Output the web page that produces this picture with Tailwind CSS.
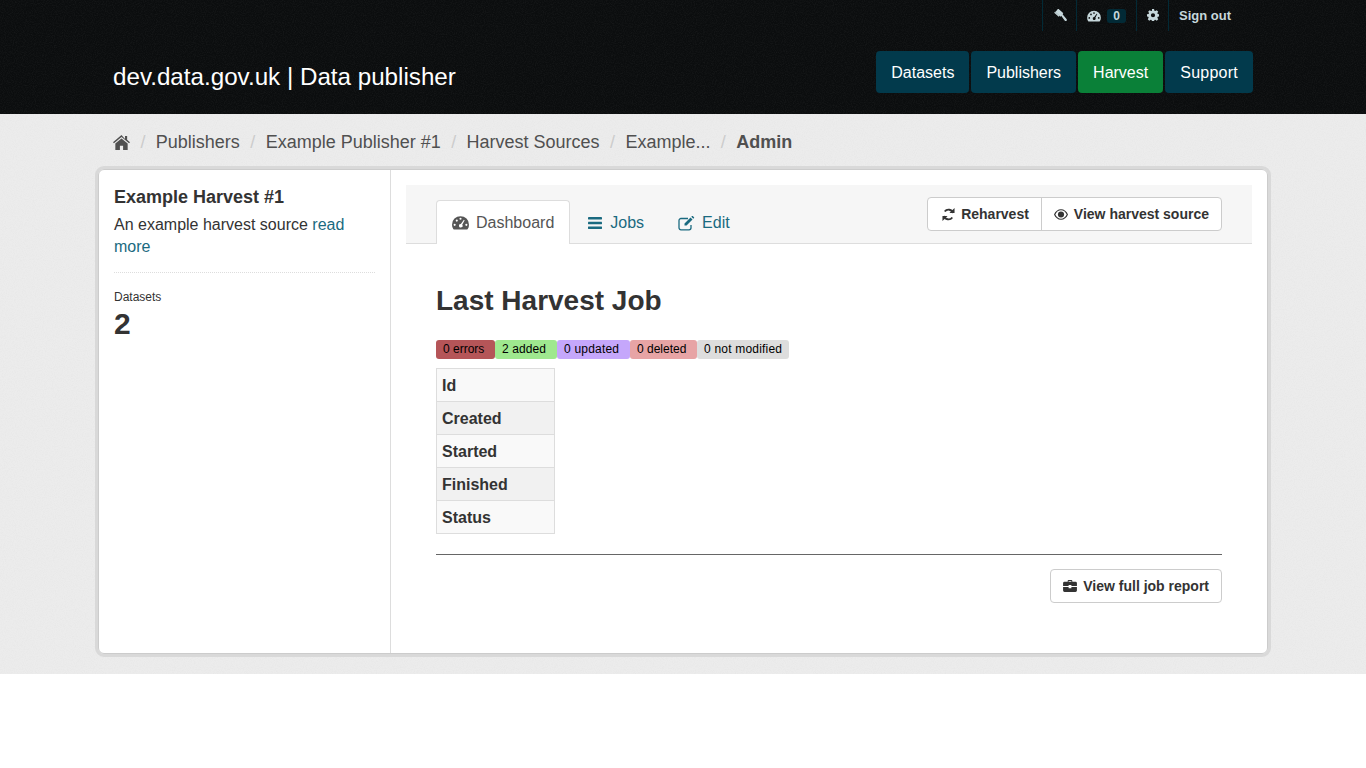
<!DOCTYPE html>
<html lang="en">
<head>
    <meta charset="UTF-8">
    <meta name="viewport" content="width=device-width, initial-scale=1.0">
    <title>Harvest Source Admin</title>
    <script src="https://cdn.jsdelivr.net/npm/@tailwindcss/browser@4"></script>
</head>
<body class="bg-white text-[#333] font-['Liberation_Sans',Arial,sans-serif] text-base">
    <!-- Filter for the speckled background of masthead and main -->
    <svg class="absolute w-0 h-0">
        <filter id="speckle"><feTurbulence type="fractalNoise" baseFrequency="0.9" numOctaves="2"/><feColorMatrix values="0 0 0 0 0.5  0 0 0 0 0.5  0 0 0 0 0.5  1.2 0 0 0 -0.45"/></filter>
    </svg>

    <!-- Masthead -->
    <header class="relative h-[114px] bg-[#0b0d0e]">
        <svg class="absolute inset-0 w-full h-full opacity-10"><rect width="100%" height="100%" filter="url(#speckle)"/></svg>
        <div class="relative w-[1170px] ml-[98px] pl-[15px] pr-[15px]">
            <!-- Account bar -->
            <div class="flex justify-end h-[31px] text-[#c6d7db] text-[13px] font-bold leading-[31px] pr-[22px]">
                <div class="flex h-full border-l border-[#022a36]">
                    <a class="flex items-center justify-center w-[34px] border-r border-[#022a36] pb-[1px]">
                        <svg class="w-[14px] h-[13px]" viewBox="0 0 16 15" fill="currentColor"><path d="M5.800 0l6 5.200-3.300 3.700-6-5.300z"/><path d="M8.700 7l1.500-1.700 5.300 6.300c.6.700.6 1.400 0 1.900-.6.600-1.300.5-1.900 0z"/><path d="M1.300 4.200l1-1.100 5.200 4.600-1 1.100zM5 .8l1-1.100 5.200 4.600-1 1.100z"/></svg>
                    </a>
                    <a class="flex items-center w-[60px] pl-[10px] gap-[6px] border-r border-[#022a36]">
                        <svg class="w-[14px] h-[12px]" viewBox="0 0 16 14" fill="currentColor" fill-rule="evenodd"><path d="M8 1a8 8 0 0 1 8 8c0 1.600-.4 3-1.200 4.200l-.5.3H1.700l-.5-.3A8 8 0 0 1 0 9a8 8 0 0 1 8-8zM2.500 8.200a1 1 0 1 0 0 2 1 1 0 0 0 0-2zM4.500 4.200a1 1 0 1 0 0 2 1 1 0 0 0 0-2zM8 2.500a1 1 0 1 0 0 2 1 1 0 0 0 0-2zM13.500 8.200a1 1 0 1 0 0 2 1 1 0 0 0 0-2zM11.200 4.500L8.300 8.300a1.700 1.700 0 1 0 1.300.7l2.300-4.200z"/></svg>
                        <span class="flex items-center justify-center w-[19px] h-[14px] rounded-[3px] bg-[#022a36] text-[12px] leading-none">0</span>
                    </a>
                    <a class="flex items-center justify-center w-[32px] border-r border-[#022a36] pb-[1px]">
                        <svg class="w-[12px] h-[12px]" viewBox="0 0 16 16" fill="currentColor" fill-rule="evenodd"><path d="M6.600 0h2.800l.4 2.200 1.300.5L13 1.500l2 2-1.200 1.900.5 1.300 2.200.4v2.800l-2.200.4-.5 1.300 1.200 1.900-2 2-1.900-1.200-1.300.5-.4 2.200H6.600l-.4-2.200-1.300-.5L3 15.500l-2-2 1.200-1.900-.5-1.300L0 9.900V7.100l2.200-.4.500-1.300L1.500 3.500l2-2 1.900 1.200 1.300-.5zM8 5.500a2.800 2.800 0 1 0 0 5.600 2.800 2.800 0 0 0 0-5.600z"/></svg>
                    </a>
                    <a class="pl-[10px]">Sign out</a>
                </div>
            </div>
            <!-- Site title and main navigation -->
            <div class="flex justify-between items-center mt-[20px] h-[42px]">
                <a class="text-[24.2px] text-white mt-[10px]">dev.data.gov.uk | Data publisher</a>
                <nav class="flex gap-[2px] text-white text-base leading-[41px]">
                    <a class="px-[15px] pt-[1px] rounded-[4px] bg-[#023a4c]">Datasets</a>
                    <a class="px-[15px] pt-[1px] rounded-[4px] bg-[#023a4c]">Publishers</a>
                    <a class="px-[15px] pt-[1px] rounded-[4px] bg-[#0a8038]">Harvest</a>
                    <a class="px-[15px] pt-[1px] rounded-[4px] bg-[#023a4c] tracking-[0.25px]">Support</a>
                </nav>
            </div>
        </div>
    </header>

    <main class="relative h-[560px] bg-[#ececec]">
        <svg class="absolute inset-0 w-full h-full opacity-15"><rect width="100%" height="100%" filter="url(#speckle)"/></svg>
        <div class="relative w-[1170px] ml-[98px]">
            <!-- Breadcrumb -->
            <ol class="flex items-center h-[56px] pl-[15px] text-[18px] text-[#505050]">
                <li class="flex items-center">
                    <svg class="w-[17px] h-[15px]" viewBox="0 0 16 14" fill="currentColor"><path d="M8 0L0 6.800l.9 1L8 1.900l7.100 5.900.9-1-2.700-2.300V.8h-2v3L8 0z"/><path d="M2.200 8v6h4.300v-4h3v4h4.300V8L8 3.200z"/></svg>
                </li>
                <li class="flex items-center"><span class="px-[10.4px] text-[#ccc]">/</span>Publishers</li>
                <li class="flex items-center"><span class="px-[10.4px] text-[#ccc]">/</span>Example Publisher #1</li>
                <li class="flex items-center"><span class="px-[10.4px] text-[#ccc]">/</span>Harvest Sources</li>
                <li class="flex items-center"><span class="px-[10.4px] text-[#ccc]">/</span>Example...</li>
                <li class="flex items-center"><span class="px-[10.4px] text-[#ccc]">/</span><b>Admin</b></li>
            </ol>

            <!-- Wrapper card -->
            <div class="flex h-[485px] -mt-[1px] bg-white rounded-[6px] border border-[#ccc] outline-[3px] outline-[#d9d9d9]">
                <!-- Sidebar -->
                <aside class="w-[292px] shrink-0 border-r border-[#ddd] pt-[16px] pl-[15px] pr-[15px]">
                    <h2 class="text-[18px] font-bold leading-[22px]">Example Harvest #1</h2>
                    <p class="mt-[6px] leading-[22px] pb-[14px] border-b border-dotted border-[#ddd]">An example harvest source <a class="text-[#1a6a80]">read more</a></p>
                    <div class="mt-[16px] text-[12px] leading-[16px]">Datasets</div>
                    <div class="mt-[1px] text-[30px] font-bold leading-[36px]">2</div>
                </aside>

                <!-- Primary column -->
                <section class="flex-1 pt-[15px] pl-[15px] pr-[15px]">
                    <div class="flex justify-between h-[59px] bg-[#f6f6f6] border-b border-[#ddd] pl-[30px] pr-[30px]">
                        <ul class="flex mt-[15px] h-[44px] text-[#1a6a80]">
                            <li class="flex items-center gap-[7px] h-full px-[15px] text-[#555] bg-white border border-b-0 border-[#ddd] rounded-t-[4px]">
                                <svg class="w-[17px] h-[15px]" viewBox="0 0 16 14" fill="currentColor" fill-rule="evenodd"><path d="M8 1a8 8 0 0 1 8 8c0 1.600-.4 3-1.200 4.200l-.5.3H1.700l-.5-.3A8 8 0 0 1 0 9a8 8 0 0 1 8-8zM2.500 8.200a1 1 0 1 0 0 2 1 1 0 0 0 0-2zM4.500 4.200a1 1 0 1 0 0 2 1 1 0 0 0 0-2zM8 2.500a1 1 0 1 0 0 2 1 1 0 0 0 0-2zM13.500 8.200a1 1 0 1 0 0 2 1 1 0 0 0 0-2zM11.200 4.500L8.300 8.300a1.700 1.700 0 1 0 1.300.7l2.300-4.200z"/></svg>
                                Dashboard
                            </li>
                            <li class="flex items-center gap-[8px] h-full pl-[18px] pr-[16px] pt-[2px]">
                                <svg class="w-[14px] h-[12px]" viewBox="0 0 14 12" fill="currentColor"><rect width="14" height="2.400" rx=".4"/><rect y="4.800" width="14" height="2.400" rx=".4"/><rect y="9.600" width="14" height="2.400" rx=".4"/></svg>
                                Jobs
                            </li>
                            <li class="flex items-center gap-[7px] h-full pl-[18px] pr-[16px] pt-[2px]">
                                <svg class="w-[17px] h-[15px]" viewBox="0 0 17 15" fill="none" stroke="currentColor"><path stroke-width="1.300" d="M13 9v2.800a2 2 0 0 1-2 2H3a2 2 0 0 1-2-2V4.500a2 2 0 0 1 2-2h7"/><path fill="currentColor" stroke="none" d="M6.500 7.500l6-6 2 2-6 6h-2zM13.300.8l.7-.7a.6.6 0 0 1 .8 0l1.200 1.200a.6.6 0 0 1 0 .8l-.7.7z"/></svg>
                                Edit
                            </li>
                        </ul>
                        <div class="flex mt-[12px] h-[34px] bg-white border border-[#ccc] rounded-[4px] text-[14px] font-bold text-[#333]">
                            <a class="flex items-center gap-[6px] pl-[14px] pr-[12px] border-r border-[#ccc]">
                                <svg class="w-[13px] h-[13px]" viewBox="0 0 14 14" fill="none" stroke="currentColor" stroke-width="2"><path d="M12 5.500A5.200 5.200 0 0 0 2.900 3.800"/><path d="M2 8.500a5.200 5.200 0 0 0 9.100 1.700"/><path fill="currentColor" stroke="none" d="M13.500 0v5.500H8zM.5 14V8.500H6z"/></svg>
                                Reharvest
                            </a>
                            <a class="flex items-center gap-[6px] px-[12px]">
                                <svg class="w-[14px] h-[11px]" viewBox="0 0 16 12" fill="currentColor" fill-rule="evenodd"><path d="M8 0c3.500 0 6.500 2.300 8 6-1.500 3.700-4.500 6-8 6s-6.500-2.300-8-6c1.500-3.700 4.500-6 8-6zM1.500 6C2.800 9 5.200 10.800 8 10.800S13.200 9 14.500 6C13.200 3 10.800 1.200 8 1.200S2.800 3 1.500 6z"/><circle cx="8" cy="6" r="3.500"/></svg>
                                View harvest source
                            </a>
                        </div>
                    </div>

                    <!-- Module content -->
                    <div class="px-[30px]">
                        <h1 class="mt-[41px] text-[28px] font-bold leading-[32px]">Last Harvest Job</h1>
                        <div class="flex mt-[23px] text-[12px] leading-[19px] text-black">
                            <span class="w-[59px] pl-[7px] rounded-[3px] bg-[#b55558]">0 errors</span>
                            <span class="w-[62px] pl-[7px] rounded-[3px] bg-[#9fe88f] tracking-[0.1px]">2 added</span>
                            <span class="w-[73px] pl-[7px] rounded-[3px] bg-[#c5a7fb] tracking-[0.2px]">0 updated</span>
                            <span class="w-[67px] pl-[7px] rounded-[3px] bg-[#e7a4a5]">0 deleted</span>
                            <span class="w-[92px] pl-[7px] rounded-[3px] bg-[#dddddd] tracking-[0.2px]">0 not modified</span>
                        </div>
                        <table class="mt-[9px] w-[119px] border-collapse font-bold">
                            <tbody>
                                <tr class="h-[33px] bg-[#f9f9f9]"><th class="border border-[#ddd] px-[5px] pt-[1px] text-left">Id</th></tr>
                                <tr class="h-[33px] bg-[#f1f1f1]"><th class="border border-[#ddd] px-[5px] pt-[1px] text-left">Created</th></tr>
                                <tr class="h-[33px] bg-[#f9f9f9]"><th class="border border-[#ddd] px-[5px] pt-[1px] text-left">Started</th></tr>
                                <tr class="h-[33px] bg-[#f1f1f1]"><th class="border border-[#ddd] px-[5px] pt-[1px] text-left">Finished</th></tr>
                                <tr class="h-[33px] bg-[#f9f9f9]"><th class="border border-[#ddd] px-[5px] pt-[1px] text-left">Status</th></tr>
                            </tbody>
                        </table>
                        <hr class="mt-[20px] border-[#666]">
                        <div class="flex justify-end mt-[14px]">
                            <a class="flex items-center gap-[6px] h-[34px] pl-[12px] pr-[12px] bg-white border border-[#ccc] rounded-[4px] text-[14px] font-bold">
                                <svg class="w-[14px] h-[12px]" viewBox="0 0 15 13" fill="currentColor"><path d="M5 2V1a1 1 0 0 1 1-1h3a1 1 0 0 1 1 1v1h3.500A1.500 1.500 0 0 1 15 3.500V6.500H9V5.500H6V6.500H0V3.500A1.500 1.500 0 0 1 1.500 2zM6 1v1h3V1z" fill-rule="evenodd"/><path d="M0 7.500h6V9h3V7.500h6V11.500A1.500 1.500 0 0 1 13.500 13h-12A1.500 1.500 0 0 1 0 11.500z"/></svg>
                                View full job report
                            </a>
                        </div>
                    </div>
                </section>
            </div>
        </div>
    </main>
</body>
</html>
